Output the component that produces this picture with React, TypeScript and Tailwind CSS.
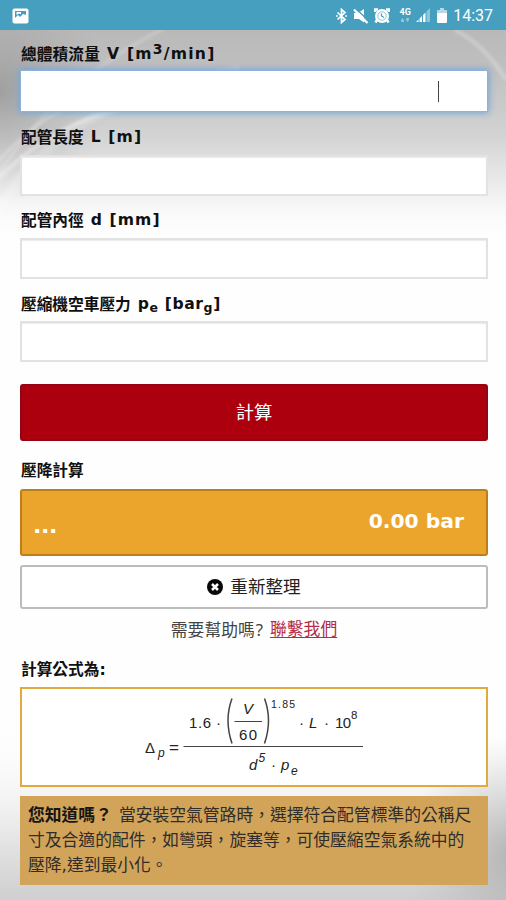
import React from "react";

const cjk = "font-['DejaVu_Sans','Noto_Sans_CJK_TC',sans-serif]";

function Backdrop() {
  return (
    <svg className="absolute inset-0 -z-10 h-full w-full" viewBox="0 0 506 870" preserveAspectRatio="none" aria-hidden="true">
      <defs>
        <linearGradient id="top" x1="0" y1="0" x2="0" y2="1">
          <stop offset="0" stopColor="#b9b9b9" />
          <stop offset="0.2" stopColor="#c0c0c0" />
          <stop offset="0.5" stopColor="#d4d4d4" />
          <stop offset="0.75" stopColor="#efefef" />
          <stop offset="1" stopColor="#ffffff" stopOpacity="0" />
        </linearGradient>
        <radialGradient id="dark" gradientUnits="userSpaceOnUse" cx="0" cy="62" r="110">
          <stop offset="0" stopColor="#808080" stopOpacity="0.55" />
          <stop offset="1" stopColor="#a0a0a0" stopOpacity="0" />
        </radialGradient>
        <linearGradient id="bottom" x1="0" y1="0" x2="0" y2="1">
          <stop offset="0" stopColor="#ffffff" stopOpacity="0" />
          <stop offset="0.7" stopColor="#e2e2e2" />
          <stop offset="1" stopColor="#cfcfcf" />
        </linearGradient>
        <radialGradient id="corner" gradientUnits="userSpaceOnUse" cx="520" cy="825" r="120">
          <stop offset="0" stopColor="#a0a0a0" stopOpacity="0.75" />
          <stop offset="1" stopColor="#c0c0c0" stopOpacity="0" />
        </radialGradient>
        <filter id="soft"><feGaussianBlur stdDeviation="1.5" /></filter>
      </defs>
      <rect width="506" height="870" fill="#fefefe" />
      <rect width="506" height="215" fill="url(#top)" />
      <rect width="260" height="200" fill="url(#dark)" />
      <g filter="url(#soft)" fill="none" stroke="#ffffff">
        <path d="M-5 150C35 85 90 35 165 -2" strokeOpacity="0.22" strokeWidth="3" />
        <path d="M-5 135C15 112 40 92 62 80" strokeOpacity="0.3" strokeWidth="2.500" />
        <path d="M-5 152C25 120 75 85 140 74" strokeOpacity="0.35" strokeWidth="4" />
        <path d="M-5 190C25 120 100 65 240 40" strokeOpacity="0.18" strokeWidth="9" />
        <path d="M455 0Q485 15 506 50" strokeOpacity="0.25" strokeWidth="4" />
      </g>
      <rect y="690" width="506" height="180" fill="url(#bottom)" />
      <rect x="390" y="700" width="116" height="170" fill="url(#corner)" />
    </svg>
  );
}

function StatusBar() {
  return (
    <header className="flex h-[30px] shrink-0 items-center bg-[#479fbf] pt-px pr-[13px] pl-3 text-white">
      <svg width="17" height="16" viewBox="0 0 17 16" aria-hidden="true">
        <rect x="0.5" y="0.5" width="16" height="15" rx="2" fill="#fff" />
        <path d="M3 3H14V7L11 6L8 9L6 7L3 10Z" fill="#479fbf" />
        <path d="M4.500 4H9V6L7 5.500L4.500 7Z" fill="#fff" />
      </svg>
      <div className="ml-auto flex items-center">
        <svg width="11" height="16" viewBox="0 0 11 16" fill="none" stroke="#fff" strokeWidth="1.7" aria-hidden="true">
          <path d="M1.500 4.500L9 11.500L5.500 14.500V1.500L9 4.500L1.500 11.500" />
          <path d="M0 8h1.800M9.200 8H11" />
        </svg>
        <svg className="ml-[6px]" width="16" height="16" viewBox="0 0 16 16" aria-hidden="true">
          <path d="M1 5H5L11 1V14.500L6 11H1Z" fill="#fff" />
          <path d="M3 0.500L16 13.500" stroke="#479fbf" strokeWidth="1.3" />
          <path d="M1 1.500L14.500 15" stroke="#fff" strokeWidth="2.200" />
        </svg>
        <svg className="ml-[5px]" width="16" height="16" viewBox="0 0 16 16" aria-hidden="true">
          <circle cx="8" cy="8" r="7" fill="#fff" />
          <path d="M1 4V1.500H4M12 1.500H15V4M3 12L1.500 14.500M13 12L14.500 14.500" stroke="#fff" strokeWidth="2.500" fill="none" />
          <circle cx="8" cy="8" r="4.200" fill="none" stroke="#479fbf" strokeWidth="0.600" />
          <path d="M7.500 5.500V8L10 9.500" fill="none" stroke="#479fbf" strokeWidth="1.300" />
        </svg>
        <div className="ml-[9px] flex h-4 w-3 flex-col items-center">
          <span className="font-[Roboto,sans-serif] text-[9px] leading-[9px] font-bold">4G</span>
          <svg className="mt-px" width="8" height="4" viewBox="0 0 8 4" fill="#fff" fillOpacity="0.4" aria-hidden="true">
            <path d="M0 2L1.500 0L3 2V4H0ZM5 0H8V2L6.500 4L5 2Z" />
          </svg>
        </div>
        <svg className="ml-[5px]" width="15" height="15" viewBox="0 0 15 15" fill="#fff" aria-hidden="true">
          <path d="M0 14L2.500 11.500V14ZM3.500 10.500L6 8V14H3.500ZM7 7L9.500 4.500V14H7Z" />
          <path d="M10.500 3.500L14 0V14H10.500Z" fillOpacity="0.4" />
        </svg>
        <svg className="ml-[6px]" width="10" height="15" viewBox="0 0 10 15" fill="#fff" aria-hidden="true">
          <path d="M3 0H7V2H10V5H0V2H3Z" fillOpacity="0.6" />
          <path d="M0 5H10V14Q10 15 9 15H1Q0 15 0 14Z" />
        </svg>
        <span className="ml-[6px] font-[Roboto,sans-serif] text-[16px] leading-5">14:37</span>
      </div>
    </header>
  );
}

type LabelProps = { text: string; children?: React.ReactNode; className?: string };

function Label({ text, children, className = "" }: LabelProps) {
  return (
    <div className={`flex shrink-0 items-center whitespace-pre pl-px font-bold text-[#101010] ${cjk} ${className}`}>
      <span className="text-[15.7px]">{text}</span>
      {children && <span className="ml-[7px] text-[15.600px]">{children}</span>}
    </div>
  );
}

function Field({ focused = false }: { focused?: boolean }) {
  return focused ? (
    <div className="flex h-[42px] shrink-0 items-center justify-end border border-[#8db3da] bg-white pr-12 shadow-[0_0_7px_1px_#76a5d5]">
      <span className="h-[21px] w-px bg-[#444]" />
    </div>
  ) : (
    <div className="h-[41px] shrink-0 border-2 border-[#e2e2e2] bg-white shadow-[inset_0_1px_1px_#ececec]" />
  );
}

function Formula() {
  return (
    <svg width="464" height="96" viewBox="22 689 464 96" className="font-['Liberation_Sans',Arial,sans-serif]" fill="#222" fontSize="15" aria-label="Pressure drop formula">
      <text x="145" y="753">Δ</text>
      <text x="158" y="757" fontSize="12" fontStyle="italic">p</text>
      <text x="169" y="753" textLength="10" lengthAdjust="spacingAndGlyphs">=</text>
      <text x="189" y="728" textLength="22">1.6</text>
      <text x="216" y="728">·</text>
      <text x="243" y="714" fontStyle="italic">V</text>
      <text x="239" y="740" textLength="18">60</text>
      <text x="271" y="708" fontSize="10.500" textLength="24">1.85</text>
      <text x="299" y="728">·</text>
      <text x="309" y="728" fontStyle="italic">L</text>
      <text x="324" y="728">·</text>
      <text x="335" y="728" textLength="16">10</text>
      <text x="351" y="719" fontSize="11.500">8</text>
      <text x="249" y="770" fontStyle="italic">d</text>
      <text x="258.500" y="762" fontSize="12" fontStyle="italic">5</text>
      <text x="271" y="770">·</text>
      <text x="281" y="770" fontStyle="italic">p</text>
      <text x="291" y="775" fontSize="12" fontStyle="italic">e</text>
      <g stroke="#444" fill="none">
        <path d="M183.500 746.500H363" strokeWidth="1.200" />
        <path d="M234.500 721.500H262" />
        <path d="M232 698.500Q224 720 232 743.500M264.500 698.500Q272.500 720 264.500 743.500" strokeWidth="1.500" />
      </g>
    </svg>
  );
}

export default function App() {
  return (
    <div className="flex h-[900px] w-[506px] flex-col overflow-hidden bg-white">
      <StatusBar />
      <main className={`relative isolate flex flex-1 flex-col pr-[18px] pl-5 ${cjk}`}>
        <Backdrop />
        <Label className="h-[40px] pt-[10px] tracking-[0.1px] [&>span+span]:tracking-[1.250px]" text="總體積流量">
          V [m<sup className="text-[14px] top-[-0.35em]">3</sup>/min]
        </Label>
        <Field focused />
        <Label className="h-[43px] pt-[9px] [&>span+span]:tracking-[1.100px]" text="配管長度">L [m]</Label>
        <Field />
        <Label className="h-[42px] pt-[7px] [&>span+span]:tracking-[1.100px]" text="配管內徑">d [mm]</Label>
        <Field />
        <Label className="h-[42px] pt-[9px] [&>span+span]:tracking-[0.600px]" text="壓縮機空車壓力">
          p<sub className="text-[12.500px]">e</sub> [bar<sub className="text-[12.500px]">g</sub>]
        </Label>
        <Field />
        <button className="mt-[22px] flex h-[57px] shrink-0 items-center justify-center rounded-[3px] border-2 border-[#950413] bg-[#ad000f] text-[18.300px] text-white">
          計算
        </button>
        <Label className="h-[48px] pt-[12px]" text="壓降計算" />
        <div className="flex h-[67px] shrink-0 justify-between rounded-[3px] border-2 border-[#bd7f19] bg-[#eba52d] pr-[22px] pl-[11px] font-bold text-white">
          <span className="pt-[23px] text-[22px] leading-6 tracking-[-0.3px]">...</span>
          <span className="pt-[18px] text-[20.300px] leading-6">0.00 bar</span>
        </div>
        <button className="mt-[9px] flex h-[44px] shrink-0 items-center justify-center gap-[7px] rounded-[3px] border-2 border-[#bcbcbc] bg-white text-[17.600px] text-[#222]">
          <svg width="16" height="16" viewBox="0 0 16 16" aria-hidden="true">
            <circle cx="8" cy="8" r="8" fill="#080808" />
            <path d="M5 5L11 11M11 5L5 11" stroke="#fff" strokeWidth="2.500" />
          </svg>
          重新整理
        </button>
        <p className="flex h-[42px] shrink-0 items-center justify-center gap-[7px] text-[16.800px] text-[#444]">
          <span>需要幫助嗎<span className="ml-px font-['Noto_Sans',sans-serif]">?</span></span>
          <a className="text-[#b52c46] underline underline-offset-2">聯繫我們</a>
        </p>
        <Label className="h-[36px] pt-px" text="計算公式為:" />
        <section className="h-[100px] shrink-0 border-2 border-[#e2aa3e] bg-white">
          <Formula />
        </section>
        <section className="mt-[9px] h-[89px] shrink-0 bg-[#d1a45a] px-2 pt-[7px] text-[16.800px] leading-[25px] whitespace-nowrap text-[#302c29]">
          <p><strong className="text-[#171513]">您知道嗎？</strong><span className="ml-[7px]">當安裝空氣管路時，選擇符合配管標準的公稱尺</span></p>
          <p>寸及合適的配件，如彎頭，旋塞等，可使壓縮空氣系統中的</p>
          <p>壓降,達到最小化。</p>
        </section>
      </main>
    </div>
  );
}
